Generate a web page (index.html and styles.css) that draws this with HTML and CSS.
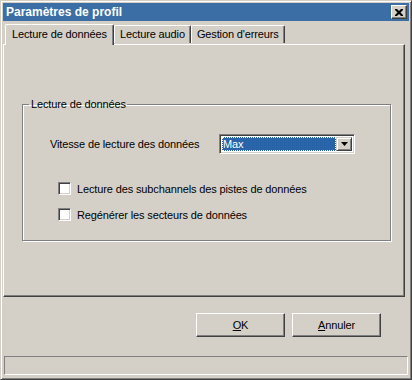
FILE: index.html
```html
<!DOCTYPE html>
<html lang="fr">
<head>
    <meta charset="UTF-8">
    <title>Paramètres de profil</title>
    <link rel="stylesheet" href="styles.css">
</head>
<body>
    <div class="window">
        <div class="titlebar">
            <span class="title">Paramètres de profil</span>
            <span class="close-btn">
                <svg width="8" height="7" viewBox="0 0 8 7"><path d="M0 0h2l2 2 2-2h2v1l-2.5 2.5L8 6v1H6L4 5 2 7H0V6l2.5-2.5L0 1z" fill="#000"/></svg>
            </span>
        </div>

        <div class="tabs">
            <div class="tab active">Lecture de données</div>
            <div class="tab">Lecture audio</div>
            <div class="tab">Gestion d'erreurs</div>
        </div>

        <div class="panel">
            <fieldset class="group">
                <legend>Lecture de données</legend>
                <div class="row">
                    <label class="row-label">Vitesse de lecture des données</label>
                    <div class="combo">
                        <span class="combo-value"><span class="focus">Max</span></span>
                        <span class="combo-arrow">
                            <svg width="7" height="4" viewBox="0 0 7 4"><path d="M0 0h7L3.5 4z" fill="#000"/></svg>
                        </span>
                    </div>
                </div>
                <div class="checks">
                    <label class="check"><span class="box"></span>Lecture des subchannels des pistes de données</label>
                    <label class="check"><span class="box"></span>Regénérer les secteurs de données</label>
                </div>
            </fieldset>
        </div>

        <div class="actions">
            <button class="btn"><u>O</u>K</button>
            <button class="btn"><u>A</u>nnuler</button>
        </div>

        <div class="statusbar"></div>
    </div>
</body>
</html>
```

FILE: styles.css
```css
body {
    margin: 0;
    background-color: #d4d0c8;
    font-family: "Liberation Sans", Arial, sans-serif;
    font-size: 11px;
    letter-spacing: -0.13px;
    color: #000;
}

.window {
    width: 412px;
    height: 380px;
    box-sizing: border-box;
    border: 1px solid;
    border-color: #d4d0c8 #404040 #404040 #d4d0c8;
    box-shadow: inset 1px 1px #fff, inset -1px -1px #808080;
    padding: 2px;
    display: flex;
    flex-direction: column;
    background-color: #d4d0c8;
}

.titlebar {
    height: 18px;
    background-color: #3a6ea5;
    color: #fff;
    display: flex;
    align-items: center;
    justify-content: space-between;
    padding: 0 2px 0 3px;
}

.title {
    font-weight: bold;
    font-size: 12px;
    letter-spacing: 0;
}

.close-btn {
    width: 16px;
    height: 14px;
    box-sizing: border-box;
    background-color: #d4d0c8;
    border: 1px solid;
    border-color: #fff #404040 #404040 #fff;
    box-shadow: inset -1px -1px #808080;
    display: flex;
    align-items: center;
    justify-content: center;
}

/* tab strip */
.tabs {
    display: flex;
    align-items: flex-end;
    height: 22px;
    padding-left: 2px;
    margin-top: 1px;
}

.tab {
    height: 18px;
    line-height: 17px;
    padding: 0 5px;
    box-sizing: border-box;
    border: 1px solid;
    border-bottom: none;
    border-color: #fff #404040 #fff #fff;
    box-shadow: inset -1px 0 #808080;
    border-radius: 2px 2px 0 0;
    margin-bottom: 1px;
}

.tab.active {
    height: 21px;
    line-height: 19px;
    padding: 0 6px;
    margin-bottom: -1px;
    position: relative;
    z-index: 1;
    background-color: #d4d0c8;
}

.panel {
    height: 253px;
    margin-right: 4px;
    box-sizing: border-box;
    border: 1px solid;
    border-color: #fff #404040 #404040 #fff;
    box-shadow: inset -1px -1px #808080;
    padding: 53px 13px 0 18px;
}

.group {
    margin: 0;
    height: 143px;
    box-sizing: border-box;
    border: 1px solid #808080;
    box-shadow: inset 1px 1px #fff, 1px 1px #fff;
    padding: 0;
}

legend {
    padding: 0 1px 0 2px;
    margin-left: 6px;
}

.row {
    display: flex;
    align-items: center;
    margin: 24px 0 0 27px;
}

.row-label {
    width: 169px;
}

.combo {
    width: 136px;
    height: 20px;
    box-sizing: border-box;
    border: 1px solid;
    border-color: #808080 #fff #fff #808080;
    box-shadow: inset 1px 1px #404040, inset -1px -1px #d4d0c8;
    background-color: #fff;
    display: flex;
    padding: 2px;
}

.combo-value {
    flex: 1;
    background-color: #2a64a8;
    color: #fff;
    display: flex;
    align-items: center;
}

.focus {
    flex: 1;
    padding-left: 1px;
    outline: 1px dotted #fff;
    outline-offset: -1px;
    height: 100%;
    line-height: 14px;
}

.combo-arrow {
    width: 16px;
    box-sizing: border-box;
    background-color: #d4d0c8;
    border: 1px solid;
    border-color: #d4d0c8 #404040 #404040 #d4d0c8;
    box-shadow: inset 1px 1px #fff, inset -1px -1px #808080;
    display: flex;
    align-items: center;
    justify-content: center;
}

.checks {
    display: flex;
    flex-direction: column;
    gap: 13px;
    margin: 28px 0 0 35px;
}

.check {
    display: flex;
    align-items: center;
    gap: 6px;
}

.box {
    width: 13px;
    height: 13px;
    box-sizing: border-box;
    background-color: #fff;
    border: 1px solid;
    border-color: #808080 #fff #fff #808080;
    box-shadow: inset 1px 1px #404040, inset -1px -1px #d4d0c8;
}

.actions {
    display: flex;
    justify-content: flex-end;
    gap: 7px;
    padding: 16px 28px 0 0;
    height: 43px;
    box-sizing: border-box;
    margin-bottom: 16px;
}

.btn {
    width: 89px;
    height: 24px;
    font-family: inherit;
    font-size: 11px;
    letter-spacing: -0.13px;
    color: #000;
    background-color: #d4d0c8;
    border: 1px solid;
    border-color: #fff #404040 #404040 #fff;
    box-shadow: inset -1px -1px #808080;
    padding: 0;
}

.statusbar {
    height: 19px;
    margin: 0 1px;
    box-sizing: border-box;
    border: 1px solid;
    border-color: #808080 #fff #fff #808080;
}
```
